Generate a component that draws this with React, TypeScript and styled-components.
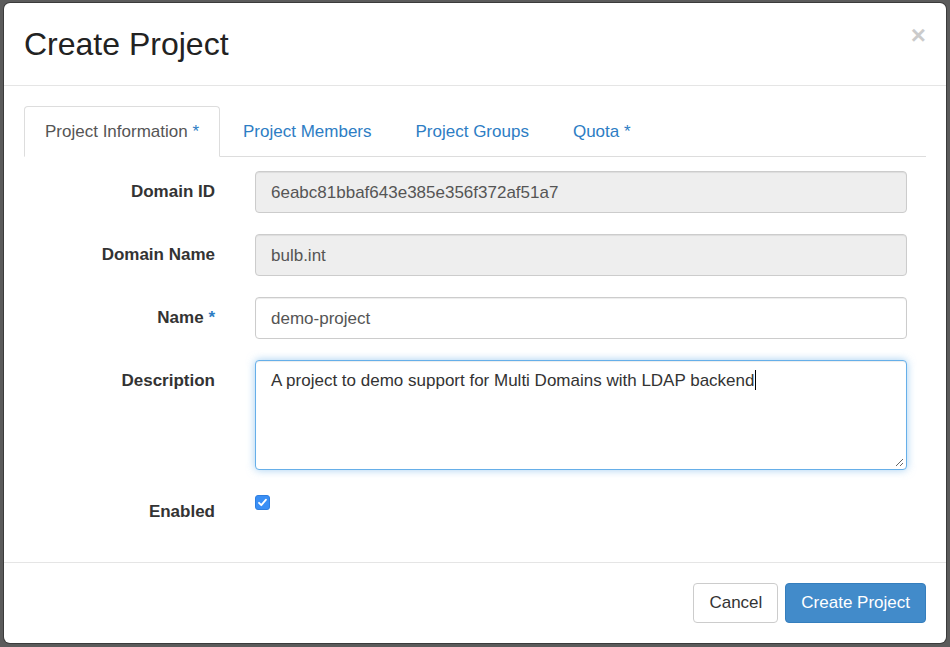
import React from "react";
import styled, { createGlobalStyle } from "styled-components";

const Global = createGlobalStyle`
  html, body { margin: 0; padding: 0; background: #5b5b5b; }
  body { font-family: "Liberation Sans", Arial, Helvetica, sans-serif; }
  * { box-sizing: border-box; }
`;

const Backdrop = styled.div`
  width: 950px;
  height: 647px;
  padding: 3px 4px 4px 4px;
  background: #5b5b5b;
`;

const Modal = styled.div`
  width: 942px;
  height: 640px;
  background: #fff;
  border-radius: 6px;
  box-shadow: 0 0 0 1px rgba(0, 0, 0, 0.35);
  display: flex;
  flex-direction: column;
  overflow: hidden;
`;

const Header = styled.div`
  display: flex;
  justify-content: space-between;
  align-items: flex-start;
  padding: 24px 20px 23px 20px;
  border-bottom: 1px solid #e5e5e5;
`;

const Title = styled.h4`
  margin: 0;
  font-size: 32px;
  line-height: 35px;
  font-weight: 400;
  color: #222;
`;

const Close = styled.button`
  border: 0;
  background: transparent;
  padding: 0;
  margin-top: -5px;
  font-family: "Liberation Sans", Arial, sans-serif;
  font-size: 26px;
  line-height: 26px;
  font-weight: 700;
  color: #000;
  opacity: 0.2;
  cursor: pointer;
`;

const Body = styled.div`
  flex: 1;
  padding: 20px 20px 28px 20px;
`;

const Tabs = styled.ul`
  display: flex;
  list-style: none;
  margin: 0;
  padding: 0;
  border-bottom: 1px solid #ddd;
  height: 51px;
`;

const Tab = styled.li<{ $active?: boolean }>`
  margin-right: 2px;
  margin-bottom: -1px;
  height: 51px;
  padding: 14px 20px 12px;
  font-size: 17px;
  line-height: 22px;
  border: 1px solid ${(p) => (p.$active ? "#ddd" : "transparent")};
  border-bottom-color: ${(p) => (p.$active ? "#fff" : "transparent")};
  border-radius: 4px 4px 0 0;
  background: ${(p) => (p.$active ? "#fff" : "transparent")};
  color: ${(p) => (p.$active ? "#555" : "#2d7dc4")};
  white-space: nowrap;
`;

const Req = styled.span`
  color: #2d7dc4;
`;

const Form = styled.div`
  display: grid;
  grid-template-columns: 191px 652px;
  column-gap: 40px;
  row-gap: 21px;
  margin-top: 14px;
`;

const Label = styled.label`
  text-align: right;
  font-size: 17px;
  font-weight: 700;
  line-height: 42px;
  height: 42px;
  color: #333;
  white-space: nowrap;
`;

const Input = styled.div<{ $disabled?: boolean }>`
  height: 42px;
  padding: 1px 15px 0;
  border: 1px solid #ccc;
  border-radius: 4px;
  background: ${(p) => (p.$disabled ? "#eee" : "#fff")};
  box-shadow: inset 0 1px 1px rgba(0, 0, 0, 0.075);
  font-size: 17px;
  line-height: 39px;
  color: #555;
  white-space: nowrap;
  overflow: hidden;
`;

const TextArea = styled.div`
  position: relative;
  height: 110px;
  padding: 8px 15px;
  border: 1px solid #66afe9;
  border-radius: 4px;
  background: #fff;
  box-shadow: inset 0 1px 1px rgba(0, 0, 0, 0.075),
    0 0 8px rgba(102, 175, 233, 0.6);
  font-size: 17px;
  line-height: 24px;
  color: #333;
`;

const Caret = styled.span`
  display: inline-block;
  width: 1px;
  height: 20px;
  background: #000;
  vertical-align: -4px;
  margin-left: 1px;
`;

const Grip = styled.svg`
  position: absolute;
  right: 2px;
  bottom: 2px;
`;

const CheckCell = styled.div`
  padding-top: 4px;
`;

const CheckBox = styled.span`
  display: flex;
  align-items: center;
  justify-content: center;
  width: 15px;
  height: 15px;
  border-radius: 3px;
  background: #3a8ff5;
  border: 1px solid #2f7fe0;
`;

const Footer = styled.div`
  display: flex;
  justify-content: flex-end;
  gap: 7px;
  padding: 20px;
  border-top: 1px solid #e5e5e5;
`;

const Button = styled.button<{ $primary?: boolean }>`
  height: 40px;
  padding: 0 15px;
  font-family: "Liberation Sans", Arial, sans-serif;
  font-size: 17px;
  border-radius: 4px;
  border: 1px solid ${(p) => (p.$primary ? "#357ebd" : "#ccc")};
  background: ${(p) => (p.$primary ? "#428bca" : "#fff")};
  color: ${(p) => (p.$primary ? "#fff" : "#333")};
  cursor: pointer;
`;

export default function App() {
  return (
    <>
      <Global />
      <Backdrop>
        <Modal>
          <Header>
            <Title>Create Project</Title>
            <Close aria-label="Close">×</Close>
          </Header>
          <Body>
            <Tabs>
              <Tab $active>
                Project Information <Req>*</Req>
              </Tab>
              <Tab>Project Members</Tab>
              <Tab>Project Groups</Tab>
              <Tab>
                Quota <Req>*</Req>
              </Tab>
            </Tabs>
            <Form>
              <Label>Domain ID</Label>
              <Input $disabled>6eabc81bbaf643e385e356f372af51a7</Input>
              <Label>Domain Name</Label>
              <Input $disabled>bulb.int</Input>
              <Label>
                Name <Req>*</Req>
              </Label>
              <Input>demo-project</Input>
              <Label>Description</Label>
              <TextArea>
                A project to demo support for Multi Domains with LDAP backend
                <Caret />
                <Grip width="9" height="9" viewBox="0 0 9 9">
                  <path d="M8 1L1 8M8 5L5 8" stroke="#666" strokeWidth="1" />
                </Grip>
              </TextArea>
              <Label>Enabled</Label>
              <CheckCell>
                <CheckBox>
                  <svg width="11" height="11" viewBox="0 0 11 11">
                    <path
                      d="M2 5.8L4.3 8.2L9 2.6"
                      fill="none"
                      stroke="#fff"
                      strokeWidth="1.8"
                      strokeLinecap="round"
                      strokeLinejoin="round"
                    />
                  </svg>
                </CheckBox>
              </CheckCell>
            </Form>
          </Body>
          <Footer>
            <Button>Cancel</Button>
            <Button $primary>Create Project</Button>
          </Footer>
        </Modal>
      </Backdrop>
    </>
  );
}
